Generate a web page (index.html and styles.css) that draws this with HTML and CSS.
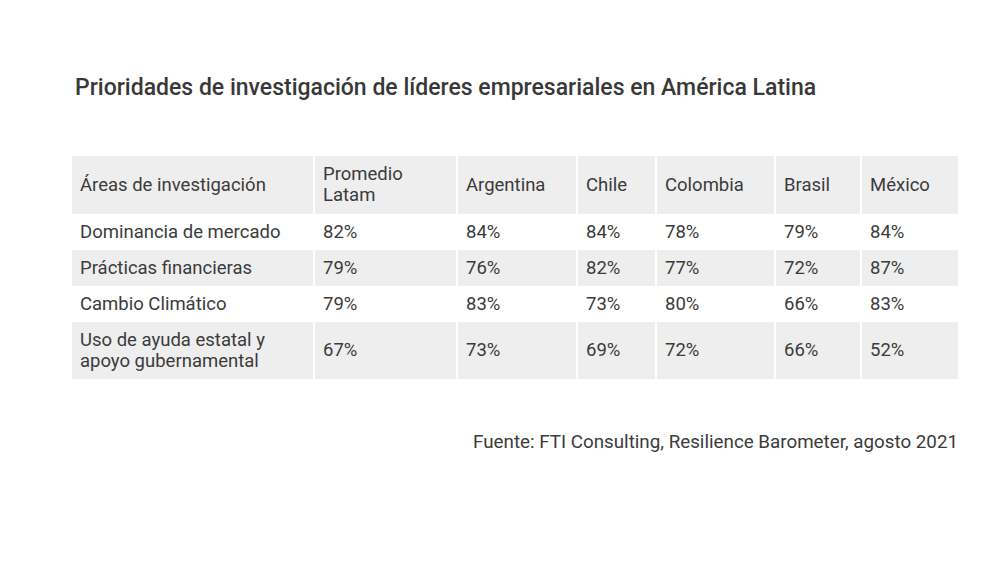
FILE: index.html
```html
<!DOCTYPE html>
<html lang="es">
<head>
<meta charset="utf-8">
<title>Prioridades de investigación</title>
<link rel="stylesheet" href="styles.css">
</head>
<body>
<div class="page">
  <h1 class="title">Prioridades de investigación de líderes empresariales en América Latina</h1>
  <table class="data">
    <colgroup>
      <col class="c1"><col class="c2"><col class="c3"><col class="c4"><col class="c5"><col class="c6"><col class="c7">
    </colgroup>
    <thead>
      <tr class="shade">
        <th>Áreas de investigación</th>
        <th>Promedio<br>Latam</th>
        <th>Argentina</th>
        <th>Chile</th>
        <th>Colombia</th>
        <th>Brasil</th>
        <th>México</th>
      </tr>
    </thead>
    <tbody>
      <tr>
        <td>Dominancia de mercado</td><td>82%</td><td>84%</td><td>84%</td><td>78%</td><td>79%</td><td>84%</td>
      </tr>
      <tr class="shade">
        <td>Prácticas financieras</td><td>79%</td><td>76%</td><td>82%</td><td>77%</td><td>72%</td><td>87%</td>
      </tr>
      <tr>
        <td>Cambio Climático</td><td>79%</td><td>83%</td><td>73%</td><td>80%</td><td>66%</td><td>83%</td>
      </tr>
      <tr class="shade">
        <td>Uso de ayuda estatal y<br>apoyo gubernamental</td><td>67%</td><td>73%</td><td>69%</td><td>72%</td><td>66%</td><td>52%</td>
      </tr>
    </tbody>
  </table>
  <p class="source">Fuente: FTI Consulting, Resilience Barometer, agosto 2021</p>
</div>
</body>
</html>
```

FILE: styles.css
```css
html, body {
  margin: 0;
  padding: 0;
  background: #ffffff;
}
body {
  font-family: Roboto, "Liberation Sans", sans-serif;
  color: #3b3b3b;
  width: 1000px;
  height: 574px;
  overflow: hidden;
}
.page {
  padding: 74px 42px 0 70px;
}
.title {
  margin: 0 0 0 5px;
  font-size: 23px;
  line-height: 28px;
  font-weight: 500;
  color: #383838;
}
.data {
  margin-top: 54px;
  border-collapse: separate;
  border-spacing: 2px 0;
  font-size: 18.5px;
  line-height: 21px;
  table-layout: fixed;
  width: 890px;
}
.c1 { width: 241px; }
.c2 { width: 141px; }
.c3 { width: 118px; }
.c4 { width: 77px; }
.c5 { width: 117px; }
.c6 { width: 84px; }
.c7 { width: 96px; }
.data th, .data td {
  text-align: left;
  font-weight: 400;
  padding: 7.5px 8px;
  vertical-align: middle;
}
.data th {
  padding-top: 8px;
  padding-bottom: 8px;
}
.shade th, .shade td {
  background: #eeeeee;
}
.source {
  margin: 52px 0 0 0;
  text-align: right;
  font-size: 18.8px;
  line-height: 22px;
}
```
